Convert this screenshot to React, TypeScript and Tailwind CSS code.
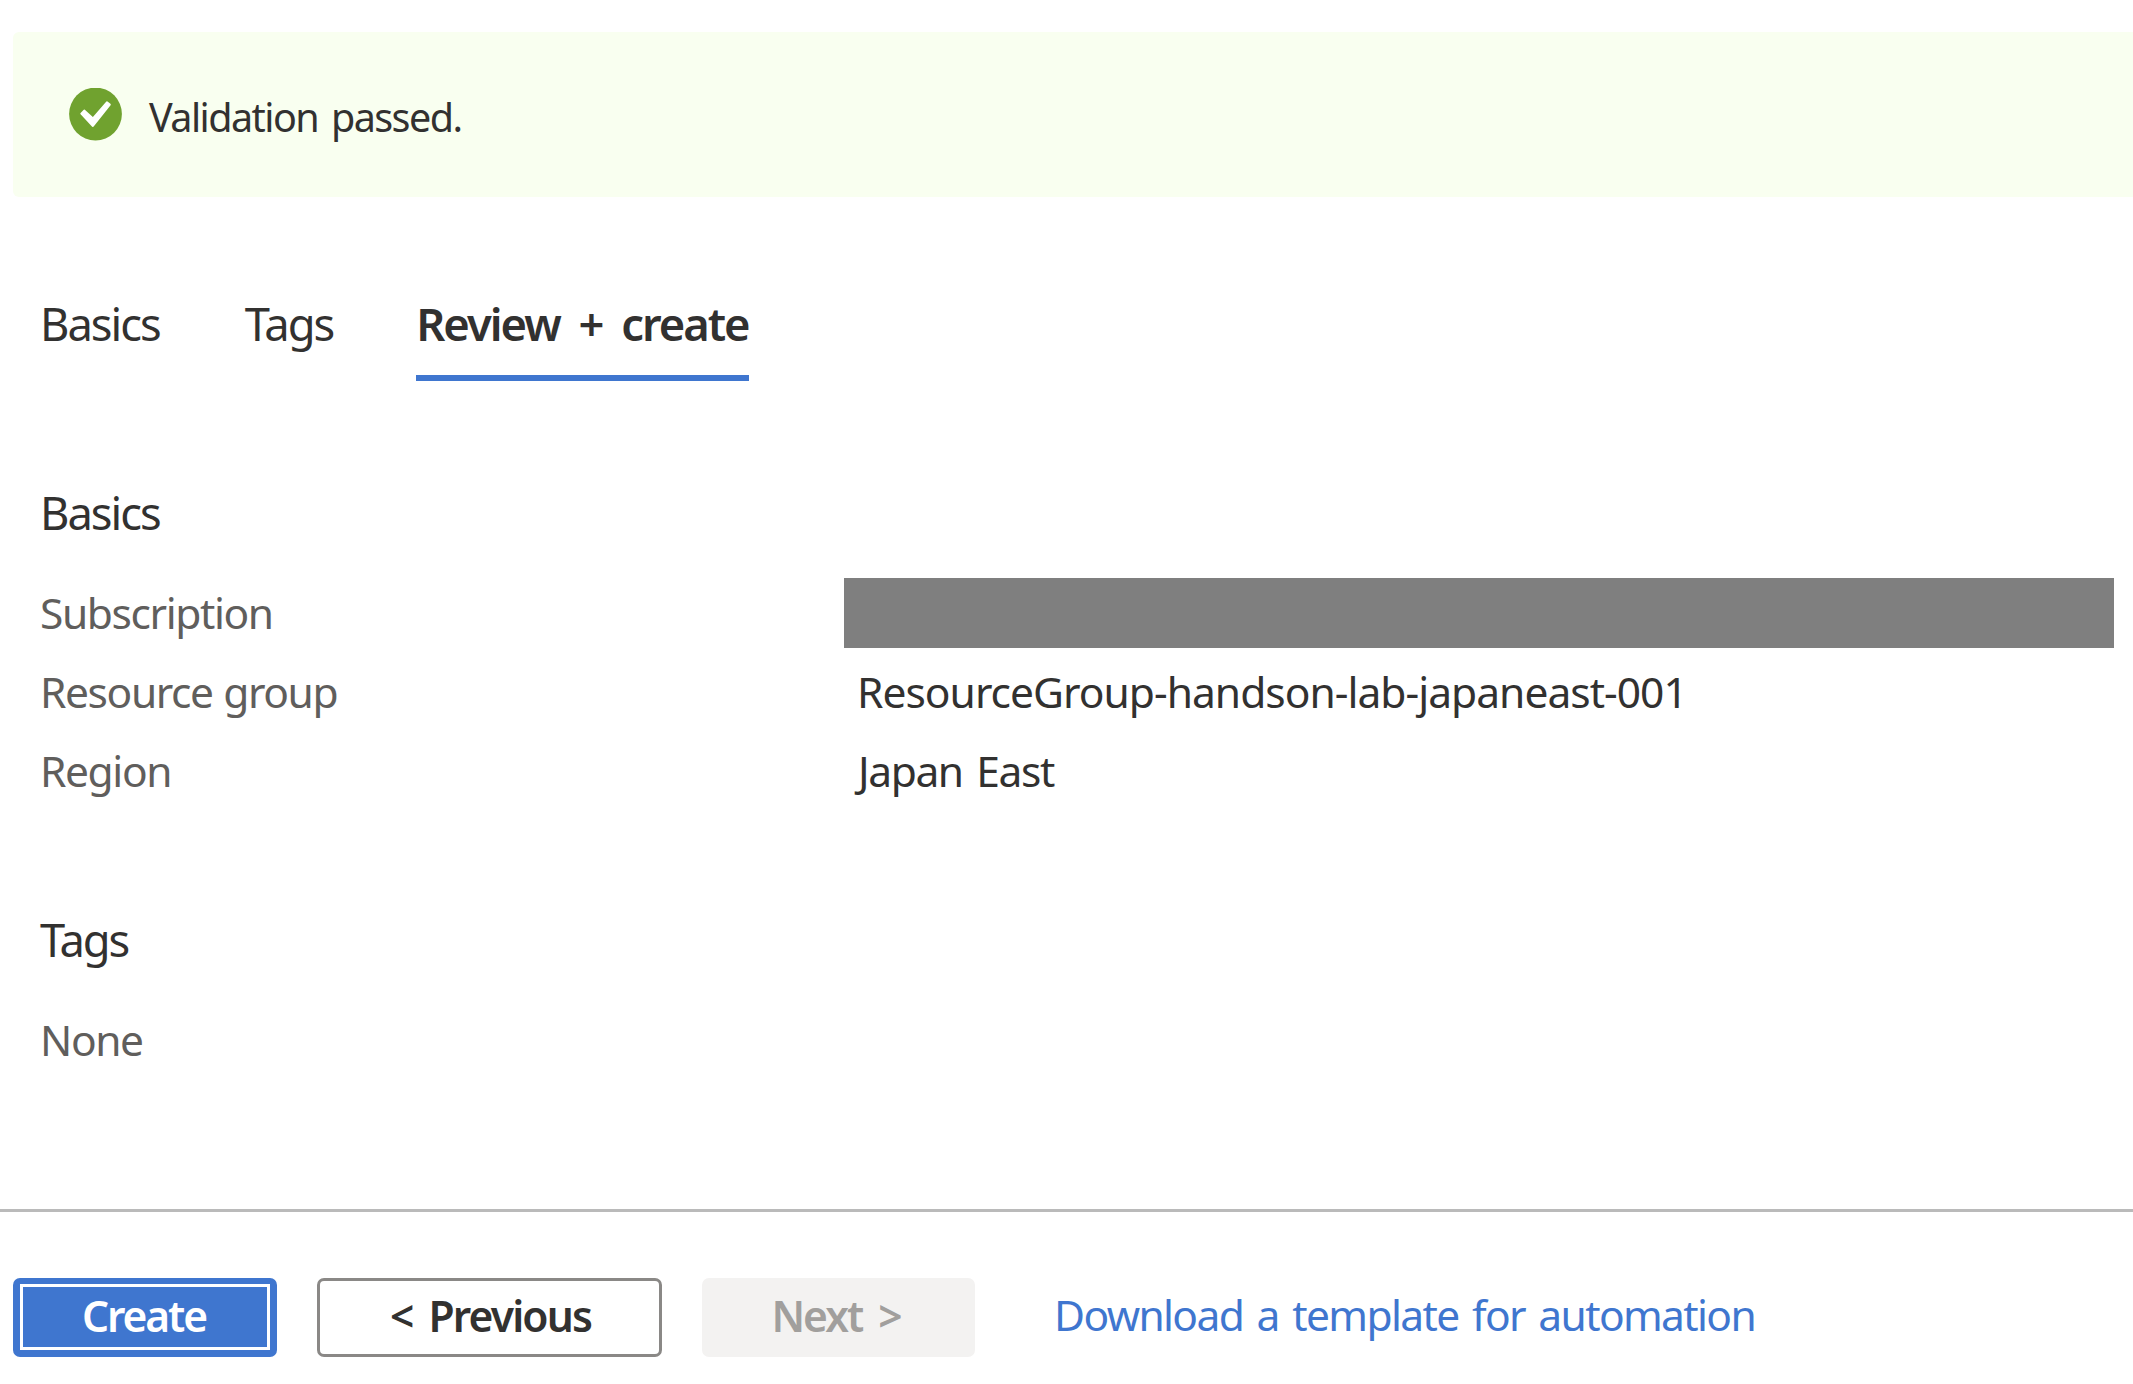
import React from "react";

function Row({ label, children }: { label: string; children?: React.ReactNode }) {
  return (
    <div className="flex h-[79px] items-center text-[42.5px] leading-[79px]">
      <dt className="w-[804px] shrink-0 tracking-[-1.4px] text-[#605e5c] [word-spacing:1px]">{label}</dt>
      <dd className="min-w-0 flex-1 text-[#323130]">{children}</dd>
    </div>
  );
}

export default function App() {
  return (
    <div className="flex h-[1384px] w-[2133px] flex-col overflow-hidden bg-white font-['Noto_Sans',sans-serif] whitespace-nowrap text-[#323130]">
      <div className="mt-8 ml-[13px] flex h-[165px] shrink-0 items-center rounded-l-md bg-[#f9fff0] pl-14">
        <svg className="h-[53px] w-[53px] shrink-0" viewBox="0 0 53 53">
          <circle cx="26.5" cy="26" r="26.4" fill="#70a22f" />
          <path
            d="M15.2 22.6 L24 30.4 L37.9 14.3 L40.8 16.6 L23.9 38 L12.3 25.6 Z"
            fill="#fff"
            stroke="#fff"
            strokeWidth="2"
            strokeLinejoin="round"
          />
        </svg>
        <span className="ml-[27px] pt-1 text-[39.5px] leading-[60px] tracking-[-1.55px] [word-spacing:4px]">Validation passed.</span>
      </div>

      <nav className="mt-[97px] flex h-[87px] shrink-0 gap-[84px] pl-10 text-[45.3px] leading-[60px] tracking-[-2px]">
        <span>Basics</span>
        <span className="ml-px">Tags</span>
        <span className="-ml-px w-[333px] border-b-[6px] border-[#3f76cf] font-semibold [word-spacing:9px]">Review + create</span>
      </nav>

      <main className="flex shrink-0 flex-col pt-[102px] pr-[19px] pl-10">
        <h2 className="text-[45.3px] leading-[60px] tracking-[-2px]">Basics</h2>
        <dl className="mt-[30px]">
          <Row label="Subscription">
            <div className="h-[70px] bg-[#7f7f7f]" />
          </Row>
          <Row label="Resource group">
            <span className="ml-[13px] tracking-[-0.97px]">ResourceGroup-handson-lab-japaneast-001</span>
          </Row>
          <Row label="Region">
            <span className="ml-[14px] tracking-[-1.4px] [word-spacing:4px]">Japan East</span>
          </Row>
        </dl>
        <h2 className="mt-[100px] text-[45.3px] leading-[60px] tracking-[-2.1px]">Tags</h2>
        <p className="mt-[30px] text-[42.5px] leading-[79px] tracking-[-1.4px] text-[#605e5c]">None</p>
      </main>

      <footer className="mt-[130px] flex grow items-start border-t-[3px] border-[#bababa] pt-[66px] pl-[13px] text-[42.5px] leading-[60px]">
        <button className="flex h-[79px] w-[264px] rounded-[7px] bg-[#3f76cf] px-[7px] pt-1.5 pb-[7px] font-semibold tracking-[-2.1px] text-white">
          <span className="flex h-full w-full items-center justify-center border-[3px] border-white pr-0.5 pb-[3px]">Create</span>
        </button>
        <button className="ml-10 flex h-[79px] w-[345px] items-center justify-center rounded-[7px] border-[3px] border-[#8a8886] pb-1 pl-0.5 font-semibold tracking-[-1.85px] [word-spacing:7px]">
          &lt; Previous
        </button>
        <button className="ml-10 flex h-[79px] w-[273px] items-center justify-center rounded-[7px] bg-[#f3f2f1] pr-[5px] pb-1 font-semibold tracking-[-2px] text-[#a19f9d] [word-spacing:7px]">
          Next &gt;
        </button>
        <a className="ml-[79px] flex h-[79px] items-center pb-1.5 tracking-[-1.63px] text-[#3f76cf] [word-spacing:4px]">Download a template for automation</a>
      </footer>
    </div>
  );
}
